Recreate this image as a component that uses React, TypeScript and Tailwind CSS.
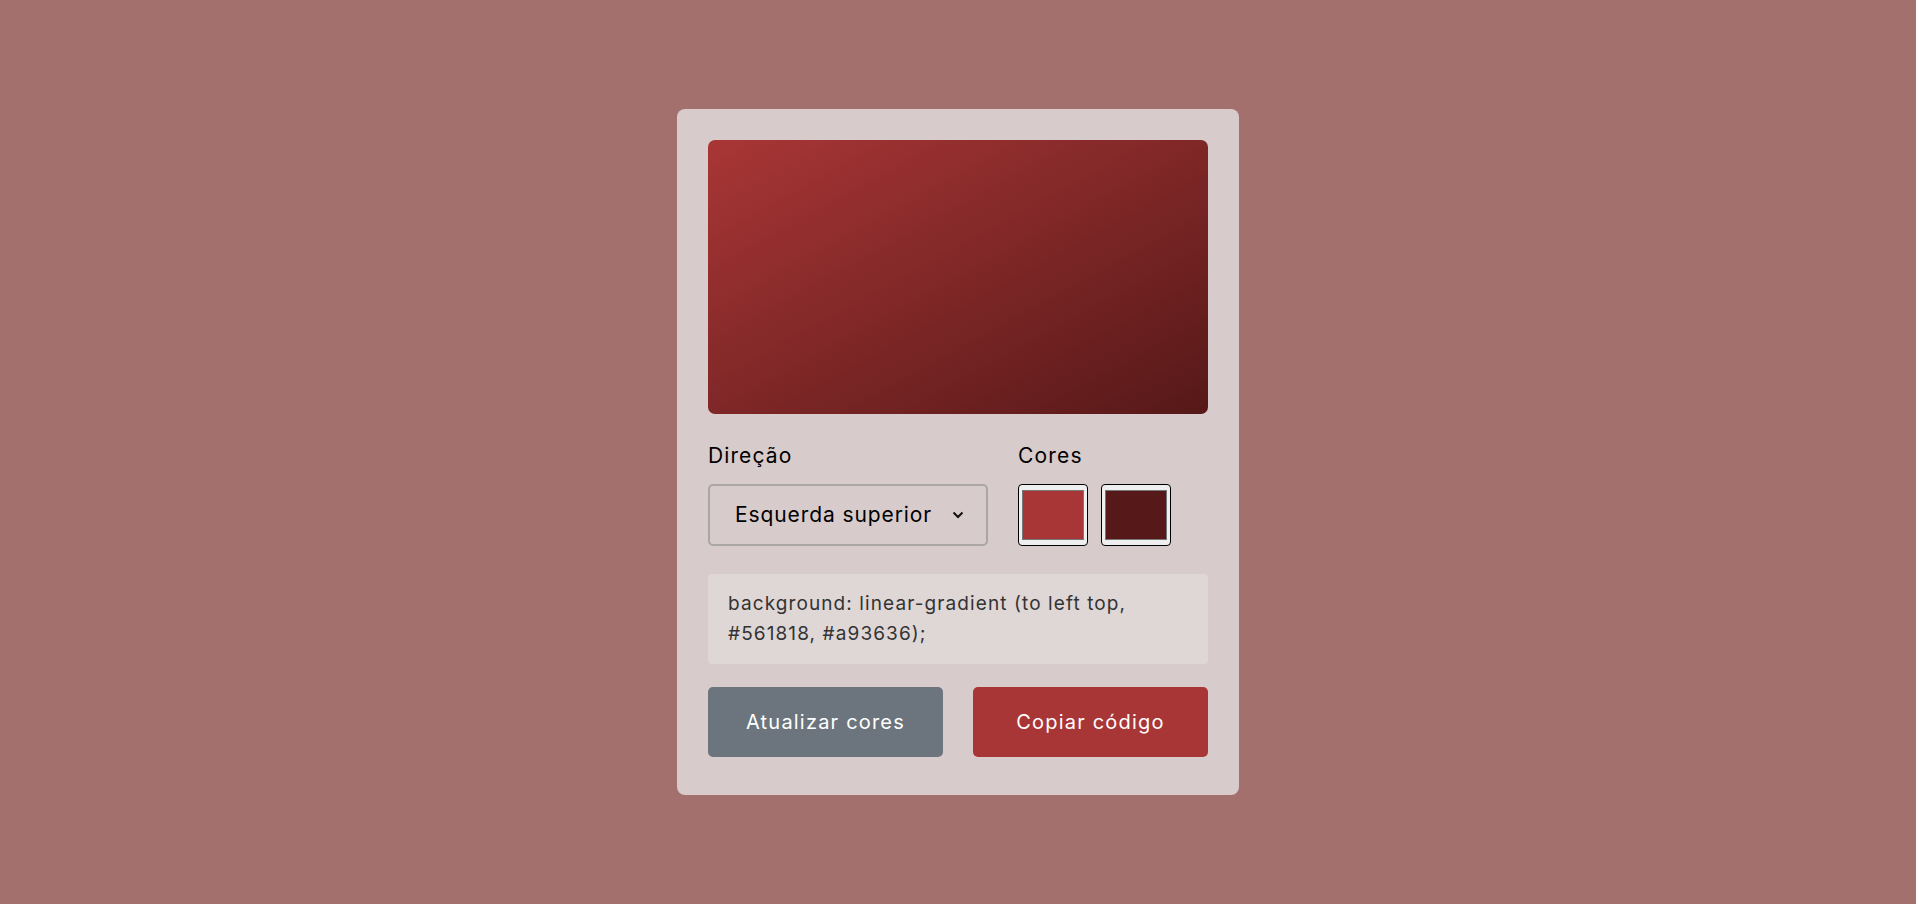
import React from "react";

export default function App() {
  const font = { fontFamily: "Inter, 'Noto Sans', sans-serif" };
  return (
    <div
      className="w-full h-[904px] bg-[#a3706e] flex items-center justify-center"
      style={font}
    >
      <div className="w-[562px] bg-[#d8cbcb] rounded-[8px] px-[31px] pt-[31px] pb-[38px] flex flex-col">
        <div className="h-[274px] rounded-[7px] bg-[linear-gradient(to_left_top,#561818,#a93636)]" />
        <div className="mt-[27px] flex gap-[30px]">
          <div className="w-[280px] flex flex-col">
            <div className="text-[21px] leading-[30px] text-black tracking-[1.1px]">Direção</div>
            <div className="mt-[13px] h-[62px] border-2 border-[#aaa6a6] rounded-[5px] flex items-center pl-[25px] pr-[22px] justify-between">
              <span className="text-[21px] text-black tracking-[0.9px]">Esquerda superior</span>
              <svg width="12" height="8" viewBox="0 0 12 8">
                <path d="M1.5 1.5 L6 6 L10.5 1.5" fill="none" stroke="#111" strokeWidth="2" />
              </svg>
            </div>
          </div>
          <div className="flex flex-col">
            <div className="text-[21px] leading-[30px] text-black tracking-[1.2px]">Cores</div>
            <div className="mt-[13px] flex gap-[13px]">
              <div className="w-[70px] h-[62px] border border-black rounded-[4px] bg-[#efefef] px-[3px] py-[5px]">
                <div className="w-full h-full border border-[#777] bg-[#a93636]" />
              </div>
              <div className="w-[70px] h-[62px] border border-black rounded-[4px] bg-[#efefef] px-[3px] py-[5px]">
                <div className="w-full h-full border border-[#777] bg-[#561818]" />
              </div>
            </div>
          </div>
        </div>
        <div className="mt-[28px] h-[90px] bg-[#dfd7d6] rounded-[4px] px-[20px] py-[15px] text-[19px] leading-[30px] text-[#333] tracking-[1.1px] whitespace-nowrap">
          background: linear-gradient (to left top,
          <br />
          #561818, #a93636);
        </div>
        <div className="mt-[23px] flex gap-[30px]">
          <button className="flex-1 h-[70px] bg-[#6c757d] rounded-[5px] text-white text-[20px] tracking-[1.2px]">
            Atualizar cores
          </button>
          <button className="flex-1 h-[70px] bg-[#a93636] rounded-[5px] text-white text-[20px] tracking-[1.2px]">
            Copiar código
          </button>
        </div>
      </div>
    </div>
  );
}
